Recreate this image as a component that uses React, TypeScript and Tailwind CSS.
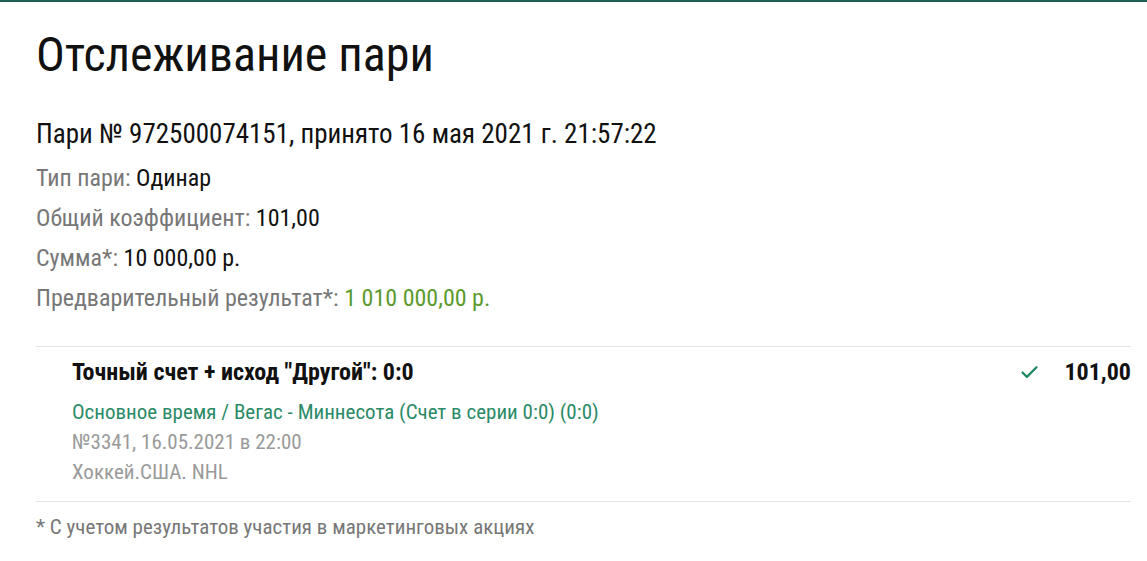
import { Check } from "lucide-react";

type InfoRow = {
  label: string;
  value: string;
  accent?: boolean;
};

const rows: InfoRow[] = [
  { label: "Тип пари:", value: "Одинар" },
  { label: "Общий коэффициент:", value: "101,00" },
  { label: "Сумма*:", value: "10 000,00 р." },
  { label: "Предварительный результат*:", value: "1 010 000,00 р.", accent: true },
];

export default function App() {
  return (
    <div className="min-h-[561px] w-full border-t-2 border-[#1f5f56] bg-white font-['Roboto_Condensed','Roboto',sans-serif] text-[#111]">
      <div className="pl-9 pr-4">
        <h1 className="pt-[21px] text-[48px] leading-[64px]">Отслеживание пари</h1>

        <p className="mt-[31px] text-[27px] leading-[32px]">
          Пари № 972500074151, принято 16 мая 2021 г. 21:57:22
        </p>

        <div className="mt-[8px] flex flex-col">
          {rows.map((row) => (
            <div key={row.label} className="text-[24px] leading-[40px] text-[#777]">
              {row.label}{" "}
              <span className={row.accent ? "text-[#5b9a2c]" : "text-[#111]"}>{row.value}</span>
            </div>
          ))}
        </div>

        <div className="mt-[28px] border-y border-[#e3e3e3] pb-[14px] pt-[10px] pl-9">
          <div className="flex items-center justify-between">
            <span className="text-[24px] font-bold leading-[30px]">
              Точный счет + исход "Другой": 0:0
            </span>
            <div className="flex items-center gap-6">
              <Check className="h-[21px] w-[21px] text-[#1f8a62]" strokeWidth={2.6} />
              <span className="text-[24px] font-bold leading-[30px]">101,00</span>
            </div>
          </div>
          <div className="mt-[10px] text-[21px] leading-[30px] text-[#2b8a67]">
            Основное время / Вегас - Миннесота (Счет в серии 0:0) (0:0)
          </div>
          <div className="text-[21px] leading-[30px] text-[#9a9a9a]">№3341, 16.05.2021 в 22:00</div>
          <div className="text-[21px] leading-[30px] text-[#9a9a9a]">Хоккей.США. NHL</div>
        </div>

        <p className="mt-[10px] text-[21px] leading-[30px] text-[#777]">
          * С учетом результатов участия в маркетинговых акциях
        </p>
      </div>
    </div>
  );
}
